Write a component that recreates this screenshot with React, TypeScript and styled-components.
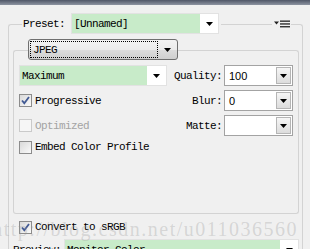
import React from 'react';
import styled, { createGlobalStyle } from 'styled-components';

const Global = createGlobalStyle`
  html, body { margin: 0; padding: 0; }
  body {
    background: #f0f0f0;
    width: 310px;
    height: 249px;
    overflow: hidden;
    font-family: "Liberation Mono", "DejaVu Sans Mono", monospace;
  }
`;

const LINE = '#d3d3d3';
const GREEN = '#c8ebc9';

const Page = styled.div`
  position: relative;
  width: 310px;
  height: 249px;
  overflow: hidden;
  background: #f0f0f0;
`;

const TitleBar = styled.div`
  height: 5px;
  background: linear-gradient(#4f5667, #8d94a1);
`;

const Group = styled.div<{ $mt: number; $ml: number; $mr: number }>`
  margin: ${p => p.$mt}px ${p => p.$mr}px 0 ${p => p.$ml}px;
`;

const GroupHeader = styled.div<{ $h: number }>`
  display: flex;
  align-items: flex-start;
  height: ${p => p.$h}px;
`;

const Corner = styled.div<{ $side: 'left' | 'right'; $w: number; $mid: number }>`
  width: ${p => p.$w}px;
  flex: none;
  align-self: stretch;
  margin-top: ${p => p.$mid}px;
  border-top: 1px solid ${LINE};
  ${p => (p.$side === 'left' ? `border-left: 1px solid ${LINE}; border-top-left-radius: 3px;` : `border-right: 1px solid ${LINE}; border-top-right-radius: 3px;`)}
`;

const Line = styled.div<{ $mid: number }>`
  flex: 1;
  margin-top: ${p => p.$mid}px;
  border-top: 1px solid ${LINE};
`;

const GroupBody = styled.div<{ $pad: string; $bottom?: boolean }>`
  border-left: 1px solid ${LINE};
  border-right: 1px solid ${LINE};
  ${p => (p.$bottom ? `border-bottom: 1px solid ${LINE}; border-bottom-left-radius: 3px; border-bottom-right-radius: 3px;` : '')}
  padding: ${p => p.$pad};
`;

const Label = styled.span<{ $align?: string; $disabled?: boolean }>`
  font-size: 11px;
  letter-spacing: -0.6px;
  color: ${p => (p.$disabled ? '#a3a3a3' : '#000')};
  white-space: nowrap;
  text-align: ${p => p.$align || 'left'};
`;

const PresetLabel = styled(Label)`
  width: 42px;
  margin: 5px 6px 0 1px;
`;

const GreenSelect = styled.div<{ $w?: number }>`
  display: flex;
  align-items: stretch;
  height: 21px;
  box-sizing: border-box;
  ${p => (p.$w ? `width: ${p.$w}px;` : 'flex: 1;')}
  border: 1px solid #e2e2e2;
  background: #fff;
`;

const GreenValue = styled.div`
  flex: 1;
  background: ${GREEN};
  display: flex;
  align-items: center;
  padding-left: 2px;
  font-size: 11px;
  letter-spacing: -0.6px;
  white-space: nowrap;
  overflow: hidden;
`;

const ArrowCell = styled.div<{ $w: number }>`
  width: ${p => p.$w}px;
  display: flex;
  align-items: center;
  justify-content: center;
`;

const Arrow = () => (
  <svg width="7" height="4" viewBox="0 0 7 4">
    <path d="M0 0H7L3.5 4Z" fill="#000" />
  </svg>
);

const MenuIcon = styled.div`
  width: 17px;
  flex: none;
  margin: 7px 1px 0 1px;
  display: flex;
`;

const FormatButton = styled.div`
  width: 150px;
  height: 21px;
  box-sizing: border-box;
  border: 1px solid #6f6f6f;
  border-radius: 3px;
  background: linear-gradient(#f3f3f3, #ebebeb 50%, #dddddd 51%, #cfcfcf);
  display: flex;
  align-items: center;
  padding: 1px;
`;

const Focus = styled.div`
  width: 128px;
  height: 17px;
  box-sizing: border-box;
  border: 1px dotted #000;
  display: flex;
  align-items: center;
  padding-left: 2px;
  font-size: 11px;
  letter-spacing: -0.6px;
`;

const Settings = styled.div`
  display: grid;
  grid-template-columns: 148px 55px 2px 69px;
  grid-template-rows: 21px 21px 21px 14px;
  row-gap: 4px;
  align-items: center;
`;

const FieldLabel = styled(Label)`
  grid-column: 2;
  text-align: right;
`;

const Combo = styled.div`
  grid-column: 4;
  height: 21px;
  box-sizing: border-box;
  border: 1px solid #a3a3a3;
  background: #fff;
  display: flex;
  align-items: center;
  padding: 1px;
`;

const ComboValue = styled.div`
  flex: 1;
  padding-left: 3px;
  font-family: "Liberation Sans", Arial, sans-serif;
  font-size: 11px;
`;

const ComboButton = styled.div`
  width: 15px;
  height: 17px;
  box-sizing: border-box;
  border: 1px solid #b5b5b5;
  background: linear-gradient(#f6f6f6, #dcdcdc);
  display: flex;
  align-items: center;
  justify-content: center;
`;

const CheckRow = styled.label<{ $indent?: number }>`
  display: flex;
  align-items: center;
  gap: 3px;
  height: 14px;
  margin-left: ${p => p.$indent || 0}px;
`;

const Box = styled.span<{ $disabled?: boolean }>`
  width: 13px;
  height: 13px;
  box-sizing: border-box;
  border: 1px solid ${p => (p.$disabled ? '#cacaca' : '#8c8c8c')};
  background: ${p => (p.$disabled ? '#f6f6f6' : 'linear-gradient(135deg, #d9d9d9, #fafafa)')};
  display: flex;
  align-items: center;
  justify-content: center;
`;

const Check = () => (
  <svg width="9" height="9" viewBox="0 0 9 9">
    <path d="M1 4.5L3.3 7.2L8 1" fill="none" stroke="#425a94" strokeWidth="1.8" />
  </svg>
);

const Checkbox = ({ label, checked, disabled, indent }: { label: string; checked?: boolean; disabled?: boolean; indent?: number }) => (
  <CheckRow $indent={indent}>
    <Box $disabled={disabled}>{checked && <Check />}</Box>
    <Label $disabled={disabled}>{label}</Label>
  </CheckRow>
);

const Row = styled.div<{ $mt: number }>`
  display: flex;
  align-items: center;
  margin-top: ${p => p.$mt}px;
`;

const PreviewLabel = styled(Label)`
  width: 51px;
  flex: none;
`;

const Watermark = styled.div`
  position: absolute;
  right: 12px;
  top: 219px;
  font-family: "Liberation Serif", "Times New Roman", serif;
  font-size: 20px;
  letter-spacing: 1.5px;
  line-height: 20px;
  color: rgba(150, 150, 150, 0.3);
  white-space: nowrap;
  pointer-events: none;
`;

export default function App() {
  return (
    <Page>
      <Global />
      <TitleBar />
      <Group $mt={8} $ml={8} $mr={7}>
        <GroupHeader $h={22}>
          <Corner $side="left" $w={13} $mid={11} />
          <PresetLabel>Preset:</PresetLabel>
          <GreenSelect $w={148}>
            <GreenValue>[Unnamed]</GreenValue>
            <ArrowCell $w={18}><Arrow /></ArrowCell>
          </GreenSelect>
          <Line $mid={11} style={{ marginLeft: 2 }} />
          <MenuIcon>
            <svg width="17" height="8" viewBox="0 0 17 8">
              <path d="M1 1.5H6L3.5 4.5Z" fill="#222" />
              <rect x="7" y="0.5" width="10" height="1.3" fill="#222" />
              <rect x="7" y="3.3" width="10" height="1.3" fill="#222" />
              <rect x="7" y="6.1" width="10" height="1.3" fill="#222" />
            </svg>
          </MenuIcon>
          <Corner $side="right" $w={11} $mid={11} />
        </GroupHeader>
        <GroupBody $pad="4px 3px 0 4px">
          <GroupHeader $h={22}>
            <Corner $side="left" $w={14} $mid={11} />
            <FormatButton>
              <Focus>JPEG</Focus>
              <ArrowCell $w={18}><Arrow /></ArrowCell>
            </FormatButton>
            <Corner $side="right" $w={0} $mid={11} style={{ flex: 1 }} />
          </GroupHeader>
          <GroupBody $pad="4px 5px 59px 5px" $bottom>
            <Settings>
              <GreenSelect>
                <GreenValue>Maximum</GreenValue>
                <ArrowCell $w={19}><Arrow /></ArrowCell>
              </GreenSelect>
              <FieldLabel>Quality:</FieldLabel>
              <Combo>
                <ComboValue>100</ComboValue>
                <ComboButton><Arrow /></ComboButton>
              </Combo>
              <Checkbox label="Progressive" checked />
              <FieldLabel>Blur:</FieldLabel>
              <Combo>
                <ComboValue>0</ComboValue>
                <ComboButton><Arrow /></ComboButton>
              </Combo>
              <Checkbox label="Optimized" disabled />
              <FieldLabel>Matte:</FieldLabel>
              <Combo>
                <ComboValue />
                <ComboButton><Arrow /></ComboButton>
              </Combo>
              <Checkbox label="Embed Color Profile" />
            </Settings>
          </GroupBody>
          <Row $mt={6}>
            <Checkbox label="Convert to sRGB" checked indent={6} />
          </Row>
          <Row $mt={5}>
            <PreviewLabel>Preview:</PreviewLabel>
            <GreenSelect>
              <GreenValue>Monitor Color</GreenValue>
              <ArrowCell $w={18}><Arrow /></ArrowCell>
            </GreenSelect>
          </Row>
        </GroupBody>
      </Group>
      <Watermark>http://blog.csdn.net/u011036560</Watermark>
    </Page>
  );
}
